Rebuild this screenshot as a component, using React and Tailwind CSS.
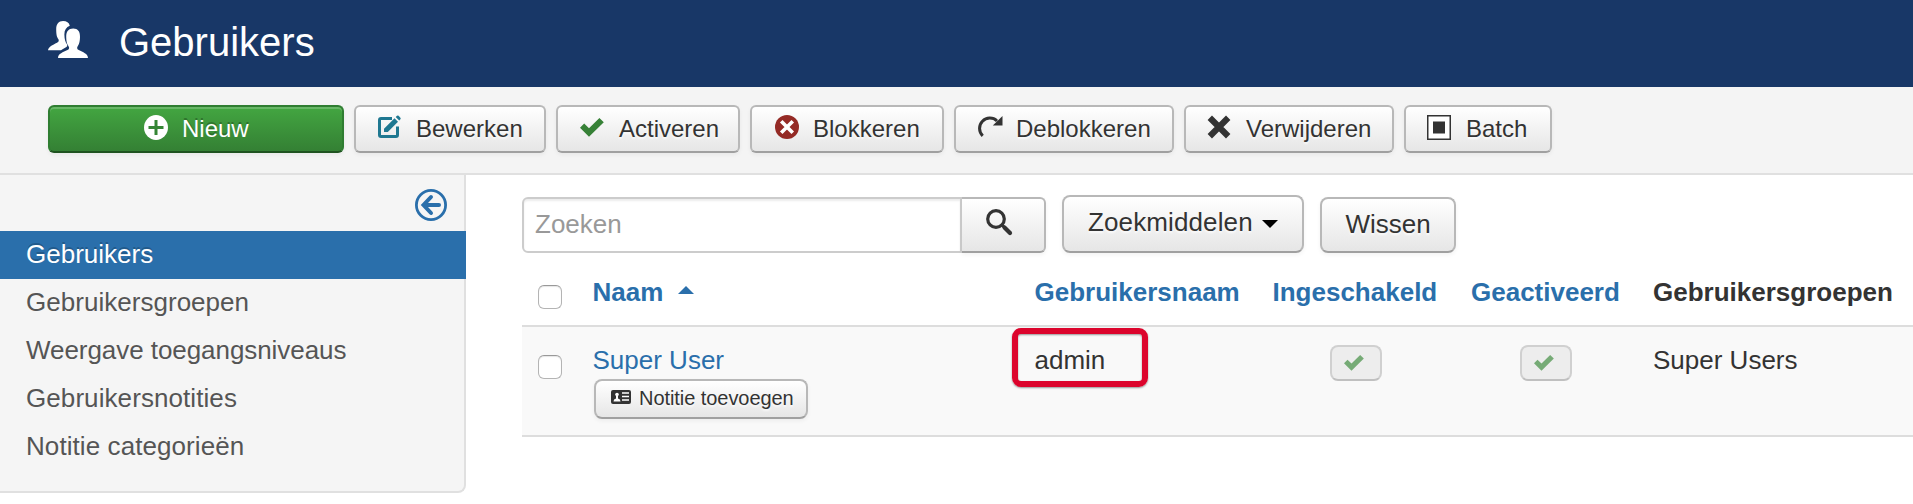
const btnBase =
  "flex shrink-0 items-center border-2 border-[#b8b8b8] border-b-[#a0a0a0] bg-linear-to-b from-white to-[#e6e6e6] text-[#333] [text-shadow:0_2px_2px_rgba(255,255,255,0.75)] shadow-[inset_0_2px_0_rgba(255,255,255,0.2),0_2px_4px_rgba(0,0,0,0.05)]";

function UsersIcon() {
  return (
    <svg className="mb-2 h-[37px] w-10" viewBox="0 0 40 37" fill="#fff">
      <path d="M0 29.300c.5-3.800 4.500-5.200 9-7.600c1.700-1 2.200-2 1.300-3.700c-1.500-2.200-2-4-2.100-9.500c0-5.500 2.300-8.500 6.900-8.500c3.600 0 5.900 1.500 6.700 4.700c-3.700 1.500-5.600 4.500-5.400 9.300c.1 4 .8 7 2.700 9.600c.5 1.900-.5 2.500-2.800 3.600c-1.200.6-2.300 1.300-3.300 2.100z" />
      <path d="M10 37c.3-4.500 5-5.600 9.500-7.900c2.200-1.200 2-2.600.6-4.600c-1.300-2-1.800-4.400-1.900-8.500c-.1-5.500 2.300-8.400 7-8.400s6.900 2.900 6.800 8.400c-.1 4.100-.6 6.500-1.900 8.500c-1.400 2-1.400 3.400.6 4.600c4.300 2.300 9 3.400 9.300 7.900z" />
    </svg>
  );
}

function PlusIcon() {
  return (
    <svg className="h-[25px] w-6" viewBox="0 0 24 25">
      <ellipse cx="12" cy="12.500" rx="12" ry="12.500" fill="#fff" />
      <path d="M12 5v15M4.500 12.500h15" stroke="#358535" strokeWidth="3" />
    </svg>
  );
}

function EditIcon() {
  return (
    <svg className="size-6" viewBox="0 0 24 24" fill="none">
      <path d="M14 3.500H3q-1.500 0-1.500 1.500v15q0 1.500 1.500 1.500h15q1.500 0 1.500-1.500v-8.500" stroke="#1f7891" strokeWidth="3" />
      <path d="M6 13.800L16.500 3.300L20 6.800L9.800 17H6zM17.700 2.100L19 .8q.8-.7 1.600 0L22.400 2.700q.7.8 0 1.600L21.200 5.600z" fill="#1f7891" />
    </svg>
  );
}

function CheckIcon({ className }) {
  return (
    <svg className={className} viewBox="0 0 24 19" fill="currentColor">
      <path d="M0 9.700L4.200 5.500L9 10.200L19.400 0L23.800 4.200L9 18.800z" />
    </svg>
  );
}

function BlockIcon() {
  return (
    <svg className="size-6" viewBox="0 0 24 24">
      <circle cx="12" cy="12" r="12" fill="#942a25" />
      <path d="M7.500 7.500l9 9M16.500 7.500l-9 9" stroke="#fff" strokeWidth="3.600" strokeLinecap="square" />
    </svg>
  );
}

function RedoIcon() {
  return (
    <svg className="h-[22px] w-[25px] shrink-0" viewBox="0 0 25 22">
      <path d="M4.700 19.800A10.100 10.100 0 1 1 19 5" fill="none" stroke="#333" strokeWidth="3" />
      <path d="M24.500 0v9.500H14.800z" fill="#333" />
    </svg>
  );
}

function CrossIcon() {
  return (
    <svg className="size-6" viewBox="0 0 24 24">
      <path d="M2.800 2.800l18.400 18.400M21.200 2.800L2.800 21.200" stroke="#333" strokeWidth="6.200" />
    </svg>
  );
}

function BatchIcon() {
  return (
    <svg className="h-[25px] w-6" viewBox="0 0 24 25">
      <rect x=".75" y=".75" width="22.500" height="23.500" fill="#fff" stroke="#333" strokeWidth="1.500" />
      <rect x="6" y="6.500" width="12" height="12" fill="#333" />
    </svg>
  );
}

function SearchIcon() {
  return (
    <svg className="size-[27px]" viewBox="0 0 27 27" fill="none" stroke="#333">
      <circle cx="10" cy="10" r="8.300" strokeWidth="3.200" />
      <path d="M16 16l2 2" strokeWidth="3" />
      <path d="M18.500 18.500l5.500 5.500" strokeWidth="4.200" strokeLinecap="round" />
    </svg>
  );
}

function CardIcon() {
  return (
    <svg className="mb-0.5 h-[14px] w-5" viewBox="0 0 20 14">
      <rect width="20" height="14" rx="2" fill="#333" />
      <path d="M11 3h7M11 6.500h7M11 10h7" stroke="#fff" strokeWidth="1.500" />
      <circle cx="6" cy="4.500" r="1.800" fill="#fff" />
      <path d="M2.500 11.500q0-2.500 2.500-3V6h2v2.500q2.500.5 2.500 3z" fill="#fff" />
    </svg>
  );
}

function BackIcon() {
  return (
    <svg className="size-8" viewBox="0 0 32 32" fill="none" stroke="#2a6fab">
      <circle cx="16" cy="16" r="14.600" strokeWidth="2.800" />
      <path d="M24 16H9M16 8L8.500 16L16 24" strokeWidth="4" strokeLinecap="round" />
    </svg>
  );
}

function ToolButton({ className, icon, children }) {
  return (
    <button className={`${btnBase} ${className} h-12 rounded-md text-2xl leading-6`}>
      <span className="flex w-6 justify-center pb-1">{icon}</span>
      <span className="whitespace-nowrap">{children}</span>
    </button>
  );
}

function Box() {
  return (
    <span className="block size-6 rounded-md border-[1.5px] border-[#b4b4b4] border-t-[#999] bg-white shadow-[inset_0_1px_1px_rgba(0,0,0,0.1)]" />
  );
}

function Status() {
  return (
    <span className="flex h-9 w-[52px] items-center rounded-lg border-2 border-[#d0d0d0] border-b-[#c0c0c0] bg-[#ededed] pb-px pl-3 text-[#76ab76]">
      <CheckIcon className="h-4 w-5" />
    </span>
  );
}

const menu = [
  { label: "Gebruikersgroepen", tracking: "tracking-[0.03px]" },
  { label: "Weergave toegangsniveaus", tracking: "tracking-[-0.06px]" },
  { label: "Gebruikersnotities", tracking: "tracking-[0.08px]" },
  { label: "Notitie categorieën", tracking: "tracking-[0.08px]" },
];
const columns = "grid grid-cols-[70.5px_442px_238px_198.5px_182px_1fr]";

export default function App() {
  return (
    <div className="h-[504px] w-[1913px] overflow-hidden bg-white font-['Liberation_Sans',Arial,sans-serif] text-[26px] leading-9 text-[#333]">
      <header className="flex h-[87px] items-center bg-[#183767] pl-12 text-white">
        <UsersIcon />
        <h1 className="pb-1 pl-[31px] text-[40px] leading-[48px]">Gebruikers</h1>
      </header>
      <div className="flex h-[88px] gap-[10px] border-b-2 border-[#e0e0e0] bg-[#f4f4f4] pt-[18px] pl-12">
        <button className="flex h-12 w-[296px] shrink-0 items-center gap-[14px] rounded-md border-2 border-[#2f7d31] border-b-[#1f5320] bg-linear-to-b from-[#43a641] to-[#348034] pl-[94px] text-2xl leading-6 text-white [text-shadow:0_-2px_0_rgba(0,0,0,0.25)] shadow-[inset_0_2px_0_rgba(255,255,255,0.2),0_2px_4px_rgba(0,0,0,0.05)]">
          <span className="pb-1"><PlusIcon /></span>
          <span>Nieuw</span>
        </button>
        <ToolButton className="w-48 gap-[14px] pl-[22px]" icon={<EditIcon />}>Bewerken</ToolButton>
        <ToolButton className="w-[184px] gap-[15px] pl-[22px]" icon={<CheckIcon className="h-[19px] w-6 text-[#378137]" />}>Activeren</ToolButton>
        <ToolButton className="w-[194px] gap-[14px] pl-[23px]" icon={<BlockIcon />}>Blokkeren</ToolButton>
        <ToolButton className="w-[220px] gap-[14px] pl-[22px]" icon={<RedoIcon />}>Deblokkeren</ToolButton>
        <ToolButton className="w-[210px] gap-[15px] pl-[21px]" icon={<CrossIcon />}>Verwijderen</ToolButton>
        <ToolButton className="w-[148px] gap-[15px] pl-[21px]" icon={<BatchIcon />}>Batch</ToolButton>
      </div>
      <div className="flex items-start">
        <aside className="h-[318px] w-[466px] shrink-0 rounded-br-lg border-r-2 border-b-2 border-[#e0e0e0] bg-[#f5f5f5] text-[#555]">
          <div className="flex h-14 items-start justify-end pt-[14px] pr-[17px]">
            <BackIcon />
          </div>
          <nav>
            <a className="-mr-0.5 block h-12 bg-[#2a6fab] pt-[5px] pl-[26px] text-white [text-shadow:0_-2px_0_rgba(0,0,0,0.2)]">Gebruikers</a>
            {menu.map((m) => (
              <a key={m.label} className={`block h-12 pt-[5px] pl-[26px] ${m.tracking}`}>{m.label}</a>
            ))}
          </nav>
        </aside>
        <main className="ml-14 min-w-0 flex-1">
          <div className="flex h-[78px] items-end">
            <div className="flex h-14 w-[440px] items-center rounded-l-md border-2 border-[#ccc] pb-0.5 pl-[11px] text-[#999] shadow-[inset_0_2px_2px_rgba(0,0,0,0.075)]">Zoeken</div>
            <button className={`${btnBase} h-14 w-[84px] rounded-r-md border-l-0 pb-1.5 pl-[24px]`}>
              <SearchIcon />
            </button>
            <button className={`${btnBase} ml-4 h-[58px] w-[242px] gap-[9px] rounded-lg pb-1 pl-[24px]`}>
              <span className="tracking-[0.12px]">Zoekmiddelen</span>
              <svg className="mt-1 h-2 w-4" viewBox="0 0 16 8"><path d="M0 0h16L8 8z" fill="#000" /></svg>
            </button>
            <button className={`${btnBase} ml-4 h-14 w-[136px] justify-center rounded-lg pb-0.5`}>Wissen</button>
          </div>
          <div className={`${columns} h-[74px] border-b-2 border-[#ddd] pt-[21px] font-bold text-[#2a6fab]`}>
            <div className="pt-[11px] pl-4"><Box /></div>
            <div className="flex gap-[14.5px]">
              <span>Naam</span>
              <svg className="mt-3 h-2 w-4" viewBox="0 0 16 8"><path d="M0 8h16L8 0z" fill="#2a6fab" /></svg>
            </div>
            <div>Gebruikersnaam</div>
            <div>Ingeschakeld</div>
            <div>Geactiveerd</div>
            <div className="text-[#333]">Gebruikersgroepen</div>
          </div>
          <div className={`${columns} h-[110px] border-b-2 border-[#ddd] bg-[#f9f9f9] pt-[15px]`}>
            <div className="pt-[13px] pl-4"><Box /></div>
            <div>
              <div className="text-[#2a6fab]">Super User</div>
              <button className={`${btnBase} mt-px ml-[1.5px] h-10 w-[214px] gap-2 rounded-lg pb-0.5 pl-[15px] text-[20px] leading-6`}>
                <CardIcon />
                <span className="whitespace-nowrap tracking-[-0.06px]">Notitie toevoegen</span>
              </button>
            </div>
            <div className="relative">
              admin
              <span className="absolute -top-[14px] -left-[22.5px] h-[59px] w-[136px] rounded-[9px] border-6 border-[#dc042c] shadow-[0_1px_2px_rgba(0,0,0,0.4),inset_0_1px_2px_rgba(0,0,0,0.4)]" />
            </div>
            <div className="pt-[3px] pl-[57.5px]"><Status /></div>
            <div className="pt-[3px] pl-[49px]"><Status /></div>
            <div>Super Users</div>
          </div>
        </main>
      </div>
    </div>
  );
}
